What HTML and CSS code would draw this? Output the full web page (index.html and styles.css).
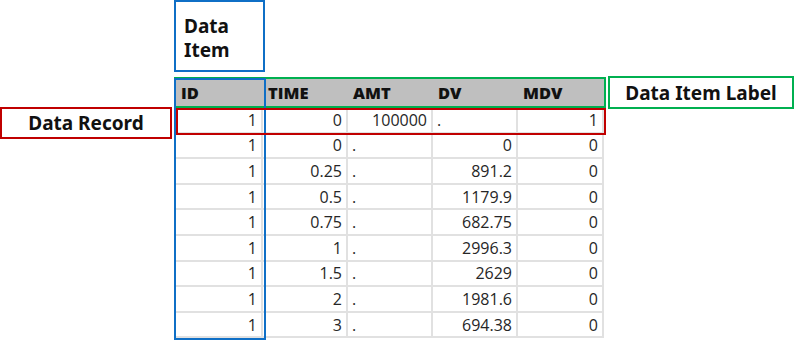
FILE: index.html
```html
<!DOCTYPE html>
<html>
<head>
<meta charset="utf-8">
<link rel="stylesheet" href="styles.css">
</head>
<body>
<div class="canvas">
  <div class="sheet">
    <div class="row head">
      <div class="cell">ID</div>
      <div class="cell">TIME</div>
      <div class="cell">AMT</div>
      <div class="cell">DV</div>
      <div class="cell">MDV</div>
    </div>
    <div class="row">
      <div class="cell num">1</div><div class="cell num">0</div><div class="cell num">100000</div><div class="cell">.</div><div class="cell num">1</div>
    </div>
    <div class="row">
      <div class="cell num">1</div><div class="cell num">0</div><div class="cell">.</div><div class="cell num">0</div><div class="cell num">0</div>
    </div>
    <div class="row">
      <div class="cell num">1</div><div class="cell num">0.25</div><div class="cell">.</div><div class="cell num">891.2</div><div class="cell num">0</div>
    </div>
    <div class="row">
      <div class="cell num">1</div><div class="cell num">0.5</div><div class="cell">.</div><div class="cell num">1179.9</div><div class="cell num">0</div>
    </div>
    <div class="row">
      <div class="cell num">1</div><div class="cell num">0.75</div><div class="cell">.</div><div class="cell num">682.75</div><div class="cell num">0</div>
    </div>
    <div class="row">
      <div class="cell num">1</div><div class="cell num">1</div><div class="cell">.</div><div class="cell num">2996.3</div><div class="cell num">0</div>
    </div>
    <div class="row">
      <div class="cell num">1</div><div class="cell num">1.5</div><div class="cell">.</div><div class="cell num">2629</div><div class="cell num">0</div>
    </div>
    <div class="row">
      <div class="cell num">1</div><div class="cell num">2</div><div class="cell">.</div><div class="cell num">1981.6</div><div class="cell num">0</div>
    </div>
    <div class="row">
      <div class="cell num">1</div><div class="cell num">3</div><div class="cell">.</div><div class="cell num">694.38</div><div class="cell num">0</div>
    </div>
  </div>

  <div class="label label-item">Data<br>Item</div>
  <div class="label label-record">Data Record</div>
  <div class="label label-itemlabel">Data Item Label</div>

  <div class="hl hl-header"></div>
  <div class="hl hl-column"></div>
  <div class="hl hl-record"></div>
</div>
</body>
</html>
```

FILE: styles.css
```css
html, body {
  margin: 0;
  padding: 0;
  background: #ffffff;
}

.canvas {
  position: relative;
  width: 794px;
  height: 341px;
  overflow: hidden;
  padding: 78px 0 0 176px;
  box-sizing: border-box;
}

.sheet {
  width: 428px;
  font-family: "Open Sans", "Noto Sans", sans-serif;
  font-size: 16px;
  color: #262626;
}

.row {
  display: grid;
  grid-template-columns: 87px 85px 85px 85px 86px;
  height: 25.6px;
  box-sizing: border-box;
  border-bottom: 2px solid #e1e1e1;
}

.row.head {
  height: 30px;
  background: #bfbfbf;
  border-bottom: none;
  font-weight: 800;
  font-size: 16.5px;
  color: #111111;
}

.cell {
  display: flex;
  align-items: center;
  padding: 0 4px;
  border-right: 2px solid #e1e1e1;
  white-space: nowrap;
  line-height: 1;
}

.head .cell {
  border-right: none;
  padding-left: 5px;
}

.cell.num {
  justify-content: flex-end;
}

.label {
  position: absolute;
  box-sizing: border-box;
  font-family: "Noto Sans", "Open Sans", sans-serif;
  font-weight: bold;
  font-size: 19px;
  color: #111111;
  background: #ffffff;
  display: flex;
  align-items: center;
}

.label-item {
  left: 174px;
  top: 0;
  width: 91px;
  height: 72px;
  border: 2px solid #0f6fc6;
  padding: 4px 0 0 8px;
  line-height: 24px;
}

.label-record {
  left: 0;
  top: 107px;
  width: 172px;
  height: 32px;
  border: 2px solid #c00000;
  justify-content: center;
}

.label-itemlabel {
  left: 608px;
  top: 76px;
  width: 186px;
  height: 33px;
  border: 2px solid #00b050;
  justify-content: center;
}

.hl {
  position: absolute;
  box-sizing: border-box;
  pointer-events: none;
}

.hl-header {
  left: 174px;
  top: 77px;
  width: 432px;
  height: 31px;
  border: 2px solid #00b050;
}

.hl-column {
  left: 174px;
  top: 78px;
  width: 92px;
  height: 262px;
  border: 2px solid #0f6fc6;
}

.hl-record {
  left: 176px;
  top: 108px;
  width: 430px;
  height: 27px;
  border: 2px solid #c00000;
}
```
